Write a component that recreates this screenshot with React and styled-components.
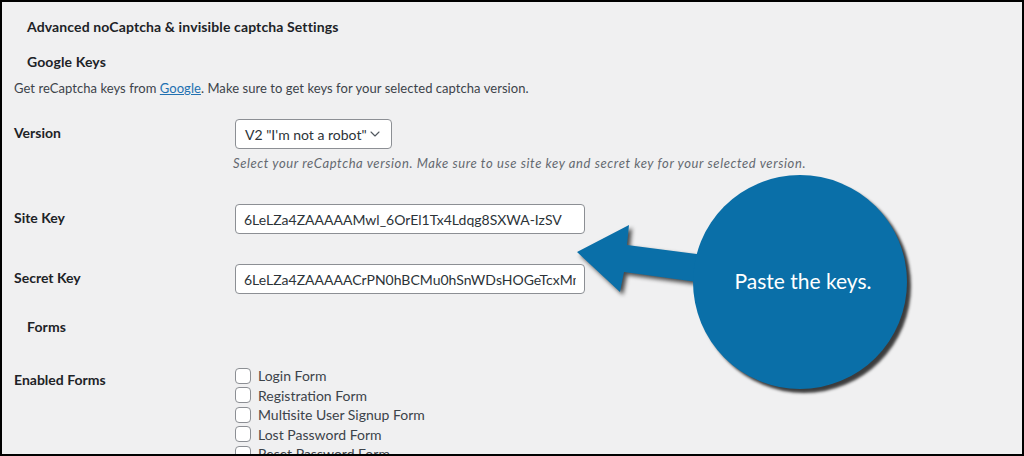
import React from "react";
import styled, { createGlobalStyle } from "styled-components";
import { ChevronDown } from "lucide-react";

const forms = [
  "Login Form",
  "Registration Form",
  "Multisite User Signup Form",
  "Lost Password Form",
  "Reset Password Form",
];

const GlobalStyle = createGlobalStyle`
  html, body {
    margin: 0;
    padding: 0;
  }
  body {
    font-family: Lato, "Noto Sans", sans-serif;
  }
`;

const Frame = styled.div`
  position: relative;
  box-sizing: border-box;
  width: 1024px;
  height: 456px;
  border: 2px solid #000;
  background: #f0f0f1;
  overflow: hidden;
  padding-left: 12px;
  color: #3c434a;
`;

const Heading = styled.h2`
  margin: ${({ $top }) => $top}px 0 0 13px;
  font-size: 14px;
  line-height: 20px;
  font-weight: 700;
  letter-spacing: 0.12px;
  color: #1d2327;
`;

const Intro = styled.p`
  margin: 6px 0 0;
  font-size: 13px;
  line-height: 20px;
  letter-spacing: 0.05px;
`;

const Link = styled.a`
  color: #2271b1;
  text-decoration: underline;
`;

const Row = styled.div`
  display: grid;
  grid-template-columns: 221px 1fr;
  margin-top: ${({ $top }) => $top}px;
`;

const Label = styled.div`
  padding-top: ${({ $pad }) => $pad ?? 4}px;
  font-size: 14px;
  line-height: 20px;
  font-weight: 700;
  color: #1d2327;
`;

const Field = styled.div`
  display: flex;
  flex-direction: column;
  align-items: flex-start;
`;

const SelectBox = styled.div`
  box-sizing: border-box;
  display: flex;
  align-items: center;
  justify-content: space-between;
  width: 157px;
  height: 30px;
  padding: 0 8px 0 9px;
  border: 1px solid #8c8f94;
  border-radius: 4px;
  background: #fff;
  font-size: 14px;
  color: #2c3338;
`;

const Help = styled.p`
  margin: 4px 0 0 -2px;
  font-size: 13px;
  line-height: 20px;
  font-style: italic;
  letter-spacing: 0.6px;
  color: #646970;
`;

const TextInput = styled.input`
  box-sizing: border-box;
  width: 350px;
  height: 30px;
  padding: 0 8px;
  border: 1px solid #8c8f94;
  border-radius: 4px;
  background: #fff;
  font-family: inherit;
  font-size: 14px;
  color: #2c3338;
  outline: none;
`;

const CheckList = styled.div`
  display: flex;
  flex-direction: column;
  margin-top: -2px;
`;

const CheckItem = styled.label`
  display: flex;
  align-items: center;
  gap: 7px;
  height: 19.5px;
  font-size: 14px;
  color: #3c434a;
`;

const Box = styled.span`
  box-sizing: border-box;
  width: 16px;
  height: 16px;
  border: 1px solid #8c8f94;
  border-radius: 4px;
  background: #fff;
`;

const Callout = styled.div`
  position: absolute;
  left: 560px;
  top: 160px;
  width: 360px;
  height: 240px;
  pointer-events: none;
`;

const Arrow = styled.svg`
  position: absolute;
  left: 0;
  top: 0;
  filter: drop-shadow(3px 3px 2px rgba(0, 0, 0, 0.7));
`;

const Bubble = styled.div`
  position: absolute;
  left: 131px;
  top: 13px;
  width: 214px;
  height: 214px;
  border-radius: 50%;
  background: #0a6fa8;
  box-shadow: 4px 4px 3px rgba(0, 0, 0, 0.75);
  display: flex;
  align-items: center;
  justify-content: center;
  padding: 0 0 4px 6px;
  box-sizing: border-box;
  color: #fff;
  font-family: Lato, "Noto Sans", sans-serif;
  font-size: 21px;
`;

export default function App() {
  return (
    <>
      <GlobalStyle />
      <Frame>
        <Heading $top={15}>Advanced noCaptcha &amp; invisible captcha Settings</Heading>
        <Heading $top={15}>Google Keys</Heading>
        <Intro>
          Get reCaptcha keys from <Link href="#">Google</Link>. Make sure to get keys for your
          selected captcha version.
        </Intro>

        <Row $top={21}>
          <Label>Version</Label>
          <Field>
            <SelectBox>
              <span>V2 "I'm not a robot"</span>
              <ChevronDown size={16} strokeWidth={1.6} color="#50575e" />
            </SelectBox>
            <Help>
              Select your reCaptcha version. Make sure to use site key and secret key for your
              selected version.
            </Help>
          </Field>
        </Row>

        <Row $top={31}>
          <Label>Site Key</Label>
          <Field>
            <TextInput readOnly defaultValue="6LeLZa4ZAAAAAMwl_6OrEl1Tx4Ldqg8SXWA-IzSV" />
          </Field>
        </Row>

        <Row $top={30}>
          <Label>Secret Key</Label>
          <Field>
            <TextInput readOnly defaultValue="6LeLZa4ZAAAAACrPN0hBCMu0hSnWDsHOGeTcxMmTq2Vb" />
          </Field>
        </Row>

        <Heading $top={23}>Forms</Heading>

        <Row $top={31}>
          <Label $pad={2}>Enabled Forms</Label>
          <CheckList>
            {forms.map((name) => (
              <CheckItem key={name}>
                <Box />
                {name}
              </CheckItem>
            ))}
          </CheckList>
        </Row>

        <Callout>
          <Arrow width="360" height="240" viewBox="0 0 360 240">
            <polygon
              points="15,90 67,63 65,83 150,94 150,122 62,110 58,130"
              fill="#0a6fa8"
            />
          </Arrow>
          <Bubble>Paste the keys.</Bubble>
        </Callout>
      </Frame>
    </>
  );
}
